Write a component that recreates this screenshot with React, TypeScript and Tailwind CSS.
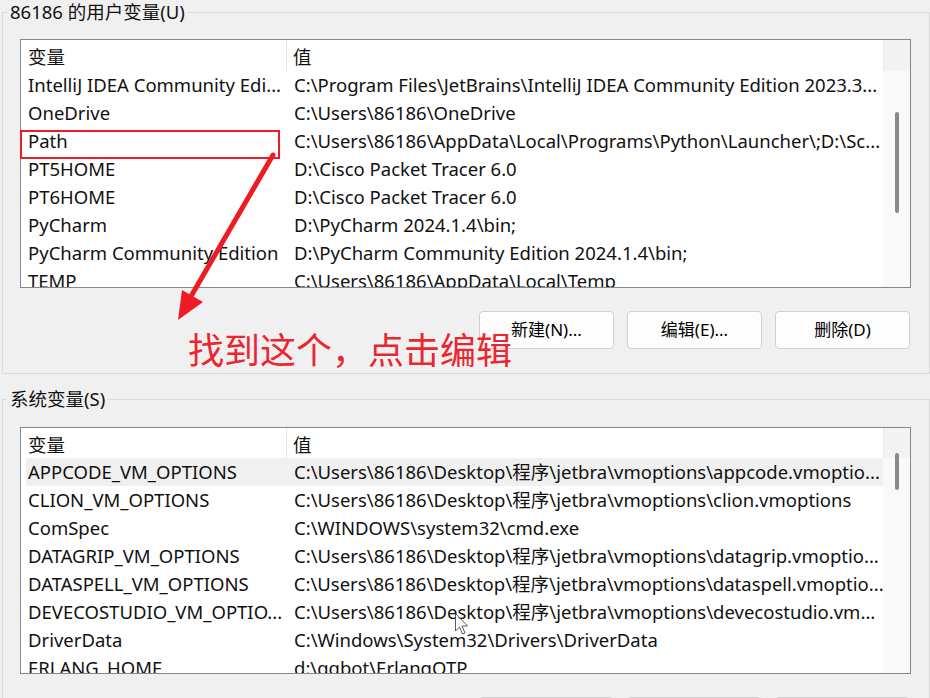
import React from 'react';

interface EnvRow {
  name: string;
  value: string;
}

const userVars: EnvRow[] = [
  { name: 'IntelliJ IDEA Community Edi...', value: 'C:\\Program Files\\JetBrains\\IntelliJ IDEA Community Edition 2023.3...' },
  { name: 'OneDrive', value: 'C:\\Users\\86186\\OneDrive' },
  { name: 'Path', value: 'C:\\Users\\86186\\AppData\\Local\\Programs\\Python\\Launcher\\;D:\\Sc...' },
  { name: 'PT5HOME', value: 'D:\\Cisco Packet Tracer 6.0' },
  { name: 'PT6HOME', value: 'D:\\Cisco Packet Tracer 6.0' },
  { name: 'PyCharm', value: 'D:\\PyCharm 2024.1.4\\bin;' },
  { name: 'PyCharm Community Edition', value: 'D:\\PyCharm Community Edition 2024.1.4\\bin;' },
  { name: 'TEMP', value: 'C:\\Users\\86186\\AppData\\Local\\Temp' },
];

const systemVars: EnvRow[] = [
  { name: 'APPCODE_VM_OPTIONS', value: 'C:\\Users\\86186\\Desktop\\程序\\jetbra\\vmoptions\\appcode.vmoptio...' },
  { name: 'CLION_VM_OPTIONS', value: 'C:\\Users\\86186\\Desktop\\程序\\jetbra\\vmoptions\\clion.vmoptions' },
  { name: 'ComSpec', value: 'C:\\WINDOWS\\system32\\cmd.exe' },
  { name: 'DATAGRIP_VM_OPTIONS', value: 'C:\\Users\\86186\\Desktop\\程序\\jetbra\\vmoptions\\datagrip.vmoptio...' },
  { name: 'DATASPELL_VM_OPTIONS', value: 'C:\\Users\\86186\\Desktop\\程序\\jetbra\\vmoptions\\dataspell.vmoptio...' },
  { name: 'DEVECOSTUDIO_VM_OPTIO...', value: 'C:\\Users\\86186\\Desktop\\程序\\jetbra\\vmoptions\\devecostudio.vm...' },
  { name: 'DriverData', value: 'C:\\Windows\\System32\\Drivers\\DriverData' },
  { name: 'ERLANG_HOME', value: 'd:\\qqbot\\ErlangOTP' },
];

interface VarListProps {
  rows: EnvRow[];
  height: string;
  headerHeight: string;
  thumbClass: string;
  hoverIndex?: number;
}

// Listenansicht mit Spaltenkopf und schmaler Scrollleiste
const VarList: React.FC<VarListProps> = ({ rows, height, headerHeight, thumbClass, hoverIndex }) => {
  return (
    <div className={`w-[891px] ${height} border border-[#828790] bg-white flex overflow-hidden`}>
      <div className="w-[862px] flex flex-col">
        <div className={`flex ${headerHeight} shrink-0 items-center`}>
          <div className="w-[266px] pl-[7px] pt-[3px] border-r border-[#e5e5e5] h-full flex items-center">变量</div>
          <div className="pl-[6px] pt-[3px]">值</div>
        </div>
        {rows.map((row, index) => (
          <div
            key={index}
            className={`flex h-[28px] shrink-0 items-center whitespace-nowrap ${index === hoverIndex ? 'bg-[#f0f0f0] ml-[5px]' : ''}`}
          >
            <div className={`${index === hoverIndex ? 'w-[262px] pl-[2px]' : 'w-[267px] pl-[7px]'} overflow-hidden`}>{row.name}</div>
            <div className="pl-[6px] overflow-hidden">{row.value}</div>
          </div>
        ))}
      </div>
      {/* Scrollleiste */}
      <div className="flex-1 flex flex-col bg-[#f9f9f9]">
        <div className={`${headerHeight} shrink-0 border-l border-[#e8e8e8] bg-[#f3f3f3]`} />
        <div className="relative flex-1">
          <div className={`absolute left-[12px] w-[4px] rounded-full bg-[#8a8a8a] ${thumbClass}`} />
        </div>
      </div>
    </div>
  );
};

const ButtonRow: React.FC = () => (
  <div className="flex justify-end gap-[13px] pr-[19px]">
    {['新建(N)...', '编辑(E)...', '删除(D)'].map((label) => (
      <button
        key={label}
        type="button"
        className="w-[135px] h-[38px] bg-[#fdfdfd] border border-[#d0d0d0] rounded-[4px] text-[17px] text-black"
      >
        {label}
      </button>
    ))}
  </div>
);

const App: React.FC = () => {
  return (
    <div
      className="relative w-[930px] h-[698px] overflow-hidden bg-[#f0f0f0] text-[18.5px] text-[#111]"
      style={{ fontFamily: '"Noto Sans", "Noto Sans CJK SC", sans-serif' }}
    >
      {/* Benutzervariablen */}
      <div className="relative mt-[12px] ml-[2px] w-[928px] border border-[#dadada] pt-[26px] pl-[17px] pb-[24px]">
        <span className="absolute -top-[14px] left-[4px] px-[3px] bg-[#f0f0f0] leading-[26px] text-[18.5px]">
          86186 的用户变量(U)
        </span>
        <VarList rows={userVars} height="h-[249px]" headerHeight="h-[31px]" thumbClass="top-[41px] h-[101px]" />
        <div className="mt-[23px] -ml-[17px]">
          <ButtonRow />
        </div>
      </div>

      {/* Systemvariablen */}
      <div className="relative mt-[25px] ml-[2px] w-[928px] border border-[#dadada] pt-[27px] pl-[17px] pb-[24px]">
        <span className="absolute -top-[14px] left-[4px] px-[3px] bg-[#f0f0f0] leading-[26px] text-[18.5px]">
          系统变量(S)
        </span>
        <VarList rows={systemVars} height="h-[247px]" headerHeight="h-[30px]" thumbClass="top-[-5px] h-[37px]" hoverIndex={0} />
        <div className="mt-[23px] -ml-[17px]">
          <ButtonRow />
        </div>
      </div>

      {/* Markierung um Path */}
      <div className="absolute left-[20px] top-[130px] w-[260px] h-[29px] border-2 border-[#ed1c24]" />

      {/* Pfeil */}
      <svg className="absolute left-0 top-0 pointer-events-none" width="930" height="698">
        <line x1="273" y1="155" x2="190" y2="298" stroke="#ed1c24" strokeWidth="5" strokeLinecap="round" />
        <polygon points="178,320 182,290 203,302" fill="#ed1c24" />
      </svg>

      <div className="absolute left-[188px] top-[333px] text-[36px] leading-none text-[#ea2630]">
        找到这个，点击编辑
      </div>

      {/* Mauszeiger */}
      <svg className="absolute left-[455px] top-[613px]" width="14" height="22" viewBox="0 0 14 22">
        <path d="M0.5 0.5 L0.5 18 L4.5 14 L7.5 21 L10 20 L7 13 L12.5 13 Z" fill="white" fillOpacity="0.6" stroke="#333" strokeWidth="0.8" />
      </svg>
    </div>
  );
};

export default App;
